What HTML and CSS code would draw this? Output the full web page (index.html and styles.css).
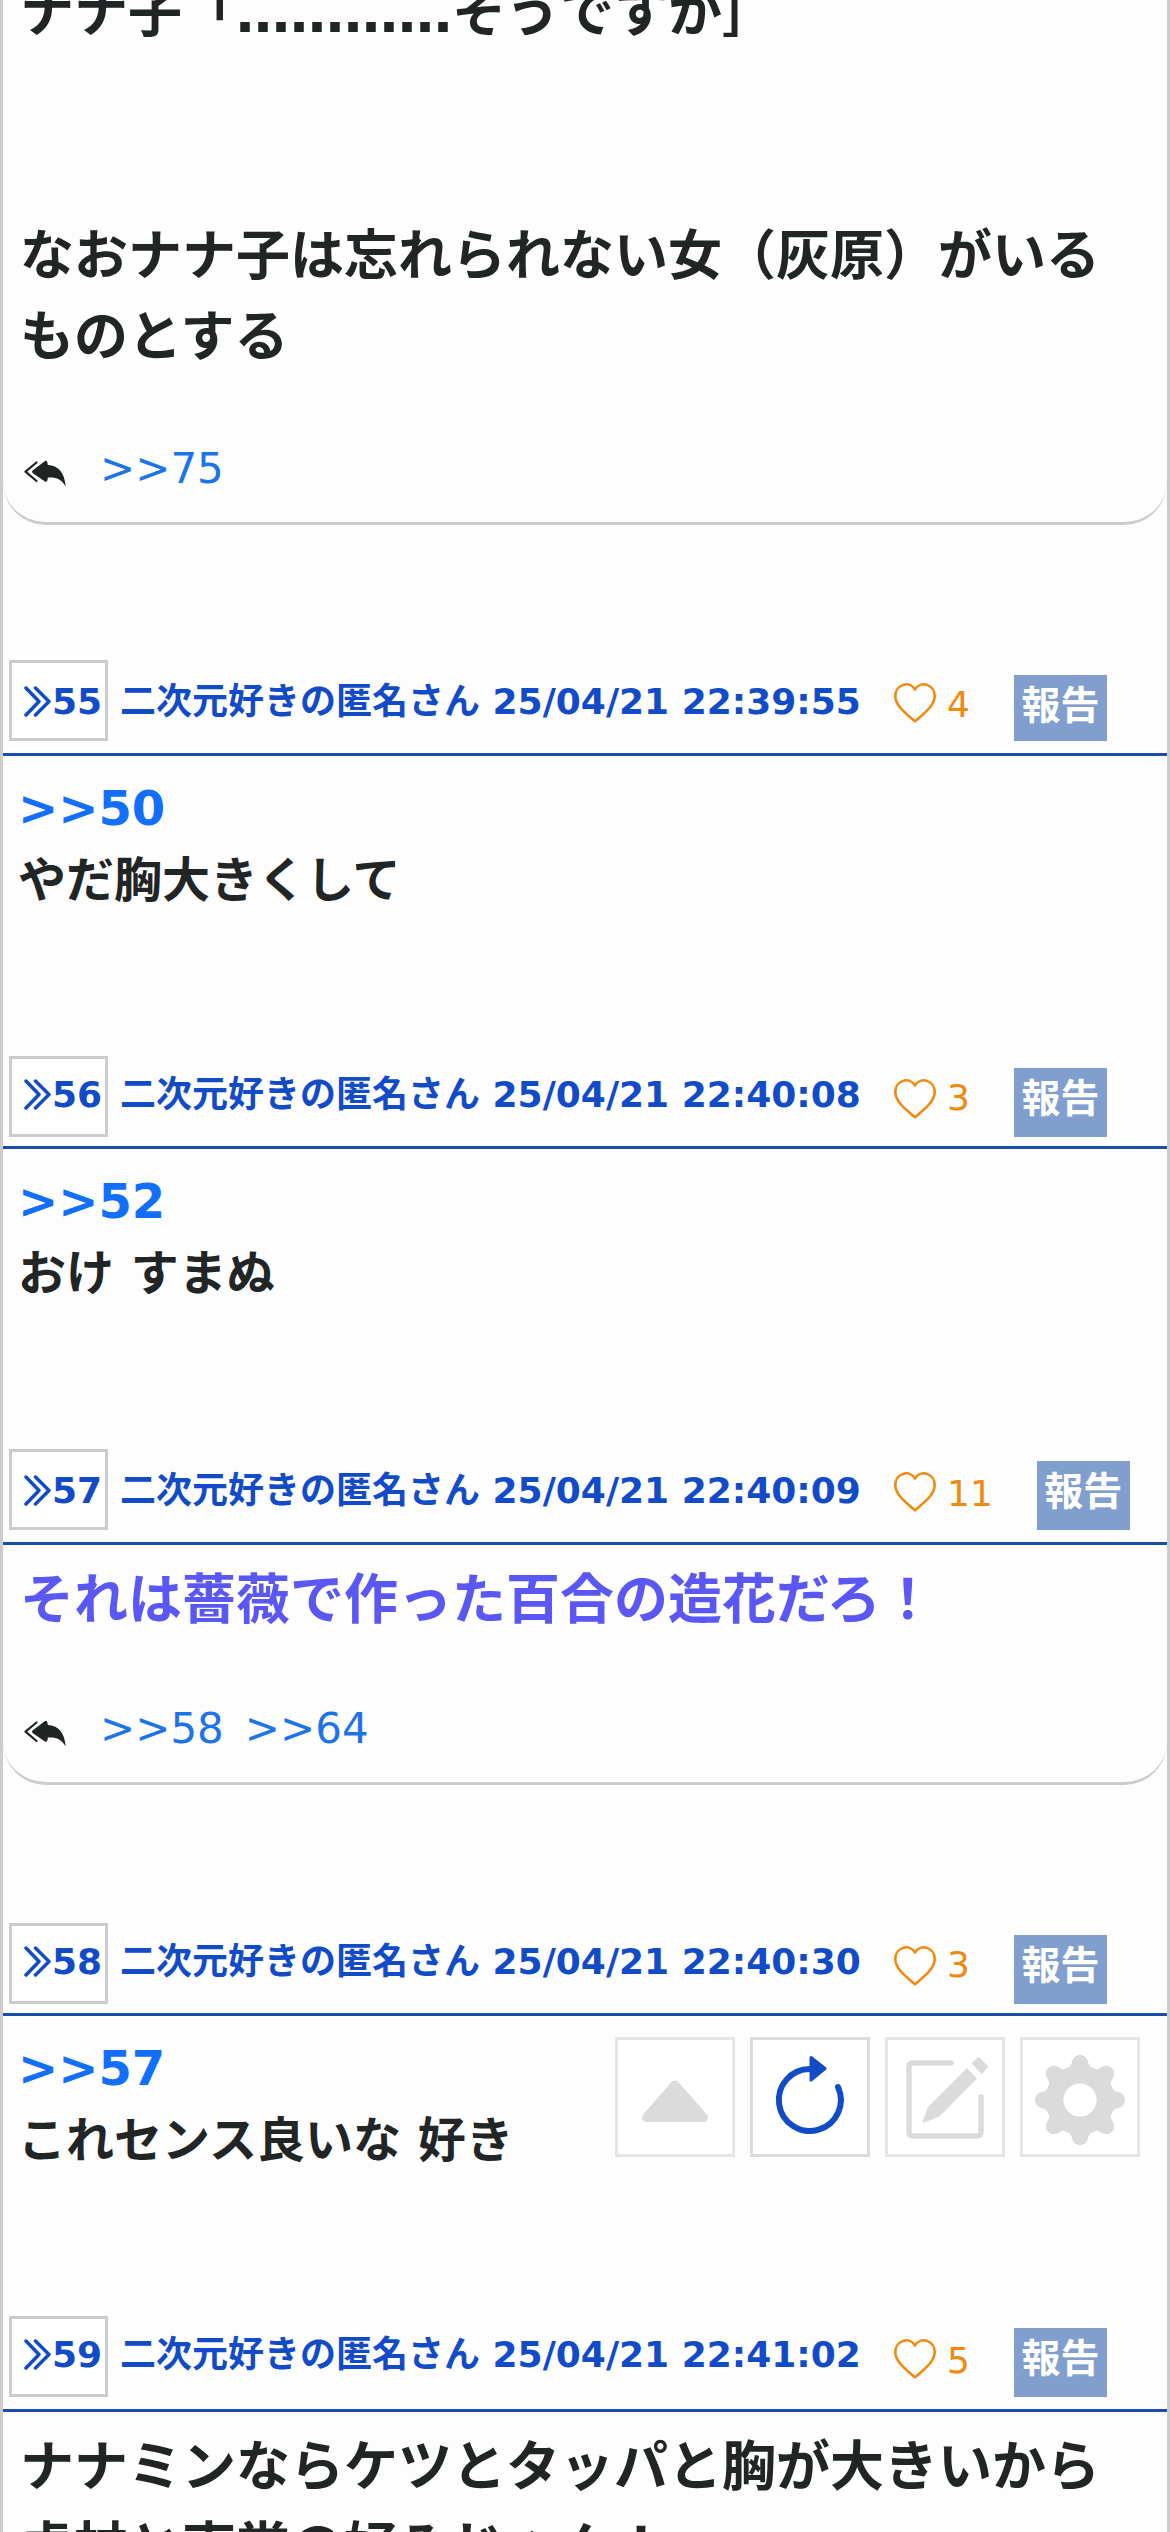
FILE: index.html
```html
<!DOCTYPE html>
<html lang="ja">
<head>
<meta charset="utf-8">
<title>スレッド</title>
<link rel="stylesheet" href="styles.css">
</head>
<body>
<svg class="defs" aria-hidden="true">
  <symbol id="chevrons" viewBox="0 0 27 31"><path d="M2 2L15 15.5L2 29M11.500 2L25 15.500L11.500 29" fill="none" stroke="currentColor" stroke-width="3.500" stroke-linecap="round" stroke-linejoin="round"/></symbol>
  <symbol id="heart" viewBox="0 0 42 40"><path d="M21 38.300C14 32 1.300 23.500 1.300 13C1.300 1.500 15.500-3 21 6.500C26.500-3 40.700 1.500 40.700 13C40.700 23.500 28 32 21 38.300Z" fill="none" stroke="currentColor" stroke-width="2.600" stroke-linejoin="round"/></symbol>
  <symbol id="replies" viewBox="0 0 42 27"><path d="M12.500 2.500L1.500 11.700L12.500 21" fill="none" stroke="currentColor" stroke-width="2.200" stroke-linecap="round" stroke-linejoin="round"/><path d="M8.500 10.500L21 1Q23.500 0 23.800 5C34 5.500 40.500 12 41.700 26.500C37.500 19 32 17 23.800 17.500Q23.500 23 21 21.500L8.500 13Q7.500 11.700 8.500 10.500Z" fill="currentColor"/></symbol>
</svg>
<main class="thread">
  <article class="post post-replied post-first">
    <div class="body large"><p>ナナ子「…………そうですか］</p><p><br></p><p><br></p><p>なおナナ子は忘れられない女（灰原）がいる</p><p>ものとする</p></div>
    <div class="replies"><svg><use href="#replies"/></svg><a>&gt;&gt;75</a></div>
  </article>

  <article class="post">
    <header class="head head-tall">
      <a class="num"><svg><use href="#chevrons"/></svg>55</a>
      <span class="meta">二次元好きの匿名さん 25/04/21 22:39:55</span>
      <span class="like"><svg><use href="#heart"/></svg>4</span>
      <a class="report report-short">報告</a>
    </header>
    <div class="body"><p><a class="anchor">&gt;&gt;50</a></p><p>やだ胸大きくして</p></div>
  </article>

  <article class="post">
    <header class="head">
      <a class="num"><svg><use href="#chevrons"/></svg>56</a>
      <span class="meta">二次元好きの匿名さん 25/04/21 22:40:08</span>
      <span class="like"><svg><use href="#heart"/></svg>3</span>
      <a class="report">報告</a>
    </header>
    <div class="body"><p><a class="anchor">&gt;&gt;52</a></p><p>おけ すまぬ</p></div>
  </article>

  <article class="post post-replied">
    <header class="head head-tall">
      <a class="num"><svg><use href="#chevrons"/></svg>57</a>
      <span class="meta">二次元好きの匿名さん 25/04/21 22:40:09</span>
      <span class="like"><svg><use href="#heart"/></svg>11</span>
      <a class="report">報告</a>
    </header>
    <div class="body large popular"><p>それは薔薇で作った百合の造花だろ！</p></div>
    <div class="replies"><svg><use href="#replies"/></svg><a>&gt;&gt;58</a><a>&gt;&gt;64</a></div>
  </article>

  <article class="post after-replies">
    <header class="head">
      <a class="num"><svg><use href="#chevrons"/></svg>58</a>
      <span class="meta">二次元好きの匿名さん 25/04/21 22:40:30</span>
      <span class="like"><svg><use href="#heart"/></svg>3</span>
      <a class="report">報告</a>
    </header>
    <div class="body"><p><a class="anchor">&gt;&gt;57</a></p><p>これセンス良いな 好き</p></div>
  </article>

  <article class="post">
    <header class="head head-last">
      <a class="num"><svg><use href="#chevrons"/></svg>59</a>
      <span class="meta">二次元好きの匿名さん 25/04/21 22:41:02</span>
      <span class="like"><svg><use href="#heart"/></svg>5</span>
      <a class="report">報告</a>
    </header>
    <div class="body large"><p>ナナミンならケツとタッパと胸が大きいから</p><p>虎杖と東堂の好みじゃん！</p></div>
  </article>
</main>

<nav class="tools">
  <button class="tool"><svg viewBox="0 0 120 120"><path d="M60 48L88.500 80.500H31.500Z" fill="currentColor" stroke="currentColor" stroke-width="9" stroke-linejoin="round"/></svg></button>
  <button class="tool tool-active"><svg viewBox="0 0 120 120"><path d="M88 50A31 31 0 1 1 60 32" fill="none" stroke="currentColor" stroke-width="6" stroke-linecap="round"/><path d="M61 20.500L75 31.500L61 43Z" fill="currentColor" stroke="currentColor" stroke-width="3" stroke-linejoin="round"/></svg></button>
  <button class="tool"><svg viewBox="0 0 120 120"><path d="M66 26H28Q24 26 24 30V95Q24 99 28 99H92Q96 99 96 95V60" fill="none" stroke="currentColor" stroke-width="5.500" stroke-linecap="round"/><path d="M82 31L92 41.500L55 79L38.500 86L37.500 85L43 70ZM86.500 26.500L92.500 20.500Q93.500 19.500 94.500 20.500L102.500 28.500Q103.500 29.500 102.500 30.500L96.800 37Z" fill="currentColor"/></svg></button>
  <button class="tool"><svg viewBox="0 0 120 120"><circle cx="60" cy="63" r="25.500" fill="none" stroke="currentColor" stroke-width="18"/><g fill="currentColor" transform="translate(0 3)"><path id="lobe" d="M46.700 28C50 27.500 51 25.500 51.800 22.500C53.500 12.500 66.500 12.500 68.200 22.500C69 25.500 70 27.500 73.300 28L68 40H52Z"/><use href="#lobe" transform="rotate(45 60 60)"/><use href="#lobe" transform="rotate(90 60 60)"/><use href="#lobe" transform="rotate(135 60 60)"/><use href="#lobe" transform="rotate(180 60 60)"/><use href="#lobe" transform="rotate(225 60 60)"/><use href="#lobe" transform="rotate(270 60 60)"/><use href="#lobe" transform="rotate(315 60 60)"/></g></svg></button>
</nav>
</body>
</html>
```
FILE: styles.css
```css
* {
  box-sizing: border-box;
}

body {
  margin: 0;
  height: 2532px;
  overflow: hidden;
  background: #fdfdfd;
  color: #212525;
  font-family: "DejaVu Sans", "Noto Sans CJK JP", sans-serif;
}

p {
  margin: 0;
}

.defs {
  position: absolute;
  width: 0;
  height: 0;
}

.thread {
  height: 2532px;
  overflow: hidden;
  border: solid #ccc;
  border-width: 0 3px;
}

.post-replied {
  border-bottom: 3px solid #ccc;
  border-radius: 0 0 43px 43px;
  margin-bottom: 135px;
}

.after-replies {
  padding-top: 3px;
}

.post-first {
  margin-top: -27px;
}

.head {
  display: flex;
  align-items: flex-start;
  height: 93px;
  padding-left: 6px;
  border-bottom: 3px solid #1a4ea8;
  color: #124bc8;
  font-size: 36px;
  font-weight: bold;
  line-height: 77px;
  white-space: nowrap;
}

.num {
  display: flex;
  width: 99px;
  height: 81px;
  padding-left: 12px;
  border: 3px solid #ccc;
  background: #fff;
  line-height: 71px;
}

.num svg {
  width: 27px;
  height: 31px;
  margin: 20px 1px 0 0;
}

.meta {
  width: 786px;
  padding-left: 12px;
}

.like {
  display: flex;
  gap: 11px;
  color: #f0890e;
  font-weight: normal;
  line-height: 84px;
}

.like svg {
  width: 42px;
  height: 40px;
  margin-top: 23px;
}

.report {
  width: 93px;
  height: 69px;
  margin: 12px 0 0 44px;
  background: #809fce;
  color: #fff;
  font-size: 39px;
  line-height: 62px;
  text-align: center;
}

.report-short {
  height: 66px;
  margin-top: 15px;
}

.head-tall,
.head-last {
  height: 96px;
}

.head-tall {
  line-height: 83px;
}

.head-tall .num {
  line-height: 77px;
}

.head-tall .num svg {
  margin-top: 23px;
}

.head-tall .like,
.head-last .like {
  line-height: 89px;
}

.body {
  height: 300px;
  padding: 16px 15px 0;
  font-size: 48px;
  font-weight: bold;
  line-height: 72px;
}

.large {
  height: auto;
  padding: 15px 17px 0;
  font-size: 54px;
  line-height: 81px;
  white-space: nowrap;
}

.post-first .large {
  padding-top: 0;
}

.popular {
  color: #5a57f5;
}

.anchor {
  color: #116ffb;
}

.replies {
  display: flex;
  height: 141px;
  padding: 56px 0 0 21px;
  color: #1d73e8;
  font-size: 42px;
  line-height: 63px;
}

.post-first .replies {
  height: 144px;
  padding-top: 59px;
}

.replies svg {
  width: 42px;
  height: 27px;
  margin: 23px 34px 0 0;
  color: #202324;
}

.replies a + a {
  margin-left: 21px;
}

/* Floating page controls */
.tools {
  position: fixed;
  top: 2037px;
  right: 30px;
  display: flex;
  gap: 15px;
}

.tool {
  width: 120px;
  height: 120px;
  padding: 0;
  border: 3px solid #e5e5e5;
  background: #fff;
  color: #dbdbdb;
}

.tool svg {
  display: block;
  width: 120px;
  height: 120px;
  margin: -3px;
}

.tool-active {
  border-color: #dbdbdb;
  color: #124bc8;
}
```
